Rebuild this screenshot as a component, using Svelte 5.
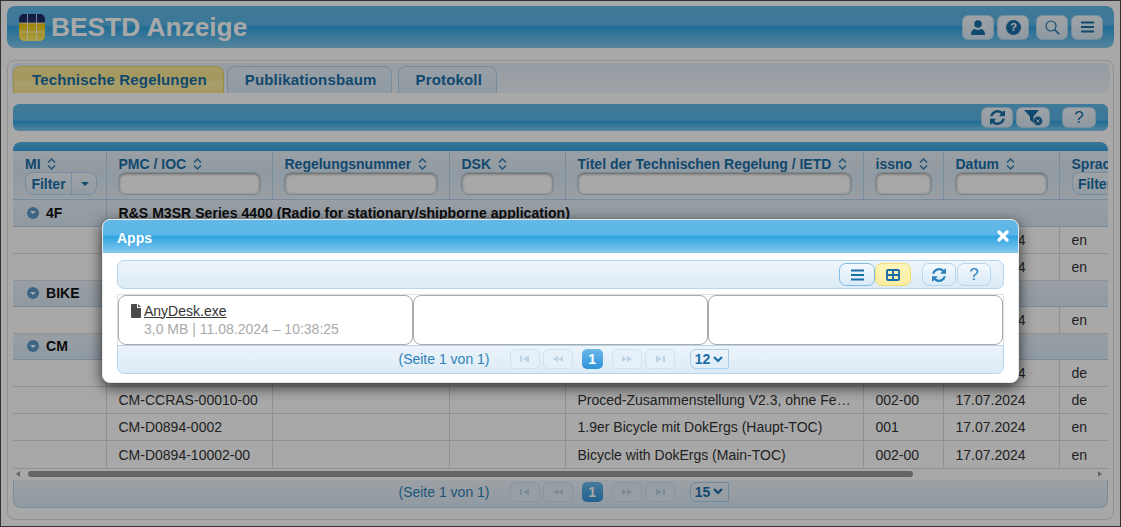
<script lang="ts">
  type Row = { nr: string; title: string; issno: string; date: string; lang: string };
  type Group = { id: string; title: string; rows: Row[] };

  const refresh =
    "M1511 928q0 5-1 7-64 268-268 434.5t-478 166.5q-146 0-282.5-55t-243.5-157l-129 129q-19 19-45 19t-45-19-19-45v-448q0-26 19-45t45-19h448q26 0 45 19t19 45-19 45l-137 137q71 66 161 102t187 36q134 0 250-65t186-179q11-17 53-117 8-23 30-23h192q13 0 22.5 9.5t9.5 22.5zm25-800v448q0 26-19 45t-45 19h-448q-26 0-45-19t-19-45 19-45l138-138q-148-137-349-137-134 0-250 65t-186 179q-11 17-53 117-8 23-30 23h-199q-13 0-22.5-9.5t-9.5-22.5v-7q65-268 270-434.5t480-166.5q146 0 284 55.5t245 156.5l130-129q19-19 45-19t45 19 19 45z";

  const columns = [
    { label: "PMC / IOC", width: 166 },
    { label: "Regelungsnummer", width: 177 },
    { label: "DSK", width: 116 },
    { label: "Titel der Technischen Regelung / IETD", width: 298 },
    { label: "issno", width: 80 },
    { label: "Datum", width: 116 },
  ];

  const d = "17.07.2024";
  const groups: Group[] = [
    {
      id: "4F",
      title: "R&S M3SR Series 4400 (Radio for stationary/shipborne application)",
      rows: [
        { nr: "", title: "", issno: "", date: d, lang: "en" },
        { nr: "", title: "", issno: "", date: d, lang: "en" },
      ],
    },
    { id: "BIKE", title: "", rows: [{ nr: "", title: "", issno: "", date: d, lang: "en" }] },
    {
      id: "CM",
      title: "",
      rows: [
        { nr: "", title: "", issno: "", date: d, lang: "de" },
        { nr: "CM-CCRAS-00010-00", title: "Proced-Zusammenstellung V2.3, ohne Fehlercodes", issno: "002-00", date: d, lang: "de" },
        { nr: "CM-D0894-0002", title: "1.9er Bicycle mit DokErgs (Haupt-TOC)", issno: "001", date: d, lang: "en" },
        { nr: "CM-D0894-10002-00", title: "Bicycle with DokErgs (Main-TOC)", issno: "002-00", date: d, lang: "en" },
      ],
    },
  ];
</script>

{#snippet refreshIcon(size: number)}
  <svg width={size} height={size} viewBox="0 0 1536 1536" fill="currentColor"><path d={refresh} /></svg>
{/snippet}

{#snippet burger()}
  <svg width="13" height="12" viewBox="0 0 13 12" fill="currentColor">
    <rect y="0.5" width="13" height="2" /><rect y="5" width="13" height="2" /><rect y="9.5" width="13" height="2" />
  </svg>
{/snippet}

{#snippet sort()}
  <svg class="sort" width="9" height="12" viewBox="0 0 9 12" fill="none" stroke="currentColor" stroke-width="1.5">
    <path d="M1 4.5 4.5 1 8 4.5M1 7.5 4.5 11 8 7.5" />
  </svg>
{/snippet}

{#snippet pager(size: string)}
  <div class="pager">
    <span class="pageinfo">(Seite 1 von 1)</span>
    <div class="pagebtns">
      <span class="pg off"><svg width="10" height="8" viewBox="0 0 10 8" fill="currentColor"><rect y="1" width="2" height="6" /><path d="M9 0.5v7L3 4z" /></svg></span>
      <span class="pg off"><svg width="12" height="8" viewBox="0 0 12 8" fill="currentColor"><path d="M6 1v6L1 4zM11 1v6L6 4z" /></svg></span>
    </div>
    <span class="pg current">1</span>
    <div class="pagebtns">
      <span class="pg off"><svg width="12" height="8" viewBox="0 0 12 8" fill="currentColor"><path d="M1 1v6l5-3zM6 1v6l5-3z" /></svg></span>
      <span class="pg off"><svg width="10" height="8" viewBox="0 0 10 8" fill="currentColor"><path d="M1 0.5v7L7 4z" /><rect x="8" y="1" width="2" height="6" /></svg></span>
    </div>
    <span class="pagesize">{size}
      <svg width="10" height="7" viewBox="0 0 10 7" fill="none" stroke="currentColor" stroke-width="2.2"><path d="M1 1l4 4 4-4" /></svg>
    </span>
  </div>
{/snippet}

<div class="screen">
  <header class="appbar">
    <div class="brand">
      <svg class="logo" width="26" height="27" viewBox="0 0 26 27">
        <defs>
          <clipPath id="logoclip"><rect width="26" height="27" rx="5" /></clipPath>
          <linearGradient id="logogold" x1="0" y1="0" x2="0" y2="1">
            <stop offset="0" stop-color="#f0c400" /><stop offset="1" stop-color="#fdf06a" />
          </linearGradient>
        </defs>
        <g clip-path="url(#logoclip)">
          <rect width="26" height="9" fill="#1c2f66" />
          <rect y="9" width="26" height="18" fill="url(#logogold)" />
          <path d="M8.5 0v27M17.5 0v27M0 9h26M0 18h26" stroke="#fff" stroke-opacity=".75" stroke-width="1" />
        </g>
      </svg>
      <h1>BESTD Anzeige</h1>
    </div>
    <div class="appbtns">
      <div class="btngroup">
        <button class="appbtn" aria-label="Benutzer">
          <svg width="14" height="15" viewBox="0 0 14 15" fill="currentColor"><circle cx="7" cy="4" r="3.8" /><path d="M0.5 15c-.6 0-.5-.6-.5-1 0-3 2-5 4-5 1 .6 2 1 3 1s2-.4 3-1c2 0 4 2 4 5 0 .4.1 1-.5 1z" /></svg>
        </button>
        <button class="appbtn" aria-label="Hilfe">
          <svg width="15" height="15" viewBox="0 0 15 15"><circle cx="7.5" cy="7.5" r="7.5" fill="currentColor" /><text x="7.5" y="11.3" text-anchor="middle" class="qmark">?</text></svg>
        </button>
      </div>
      <div class="btngroup">
        <button class="appbtn" aria-label="Suche">
          <svg width="15" height="15" viewBox="0 0 15 15" fill="none" stroke="currentColor"><circle cx="6" cy="6" r="5" stroke-width="1.1" /><path d="M9.7 9.7 14.3 14.3" stroke-width="1.5" /></svg>
        </button>
        <button class="appbtn" aria-label="Menü">{@render burger()}</button>
      </div>
    </div>
  </header>

  <section class="panel">
    <nav class="tabs">
      <span class="tab active">Technische Regelungen</span>
      <span class="tab">Publikationsbaum</span>
      <span class="tab">Protokoll</span>
    </nav>

    <div class="content">
      <div class="toolbar">
        <div class="btngroup">
          <button class="toolbtn" aria-label="Aktualisieren">{@render refreshIcon(15)}</button>
          <button class="toolbtn wide" aria-label="Filter löschen">
            <svg width="19" height="16" viewBox="0 0 19 16"><path d="M0 0h15L9.5 6.5V13L6 10V6.5z" fill="currentColor" /><circle cx="14" cy="11" r="4.4" fill="currentColor" /><path d="M12.5 9.5l3 3M15.5 9.5l-3 3" stroke="#dde6ee" stroke-width="1" /></svg>
          </button>
        </div>
        <button class="toolbtn help" aria-label="Hilfe"><span>?</span></button>
      </div>

      <div class="tablewrap">
        <div class="tabletop"></div>
        <table>
          <colgroup>
            <col style="width:93px" />
            {#each columns as c}<col style="width:{c.width}px" />{/each}
            <col style="width:60px" />
          </colgroup>
          <thead>
            <tr>
              <th>
                <div class="th-label">MI {@render sort()}</div>
                <div class="filtersplit"><span>Filter</span><span class="caret"></span></div>
              </th>
              {#each columns as c}
                <th>
                  <div class="th-label">{c.label} {@render sort()}</div>
                  <div class="filterinput"></div>
                </th>
              {/each}
              <th>
                <div class="th-label">Sprache</div>
                <div class="filtersplit open"><span>Filter</span></div>
              </th>
            </tr>
          </thead>
          <tbody>
            {#each groups as g}
              <tr class="group">
                <td class="gid"><span class="minus"></span>{g.id}</td>
                <td colspan="7">{g.title}</td>
              </tr>
              {#each g.rows as r}
                <tr>
                  <td></td>
                  <td>{r.nr}</td>
                  <td></td>
                  <td></td>
                  <td class="ell">{r.title}</td>
                  <td>{r.issno}</td>
                  <td>{r.date}</td>
                  <td>{r.lang}</td>
                </tr>
              {/each}
            {/each}
          </tbody>
        </table>
      </div>

      <div class="scrollbar">
        <span class="arrow left"></span>
        <span class="thumb"></span>
        <span class="arrow right"></span>
      </div>

      <div class="tablefoot">{@render pager("15")}</div>
    </div>
  </section>

  <div class="overlay"></div>

  <div class="dialog" role="dialog" aria-label="Apps">
    <div class="dialog-title">
      <span class="dialog-name">Apps</span>
      <svg class="close" width="12" height="12" viewBox="0 0 12 12" stroke="#fff" stroke-width="3.2" stroke-linecap="round"><path d="M2 2l8 8M10 2l-8 8" /></svg>
    </div>
    <div class="dialog-body">
      <div class="dlgbar">
        <div class="btngroup">
          <button class="dlgbtn" aria-label="Liste">{@render burger()}</button>
          <button class="dlgbtn on" aria-label="Kacheln">
            <svg width="14" height="12" viewBox="0 0 14 12" fill="none" stroke="currentColor" stroke-width="1.9"><rect x="1" y="1" width="12" height="10" rx="1" /><path d="M7 1v10M1 6h12" /></svg>
          </button>
        </div>
        <div class="btngroup">
          <button class="dlgbtn light" aria-label="Aktualisieren">{@render refreshIcon(14)}</button>
          <button class="dlgbtn light" aria-label="Hilfe"><span class="q">?</span></button>
        </div>
      </div>
      <div class="cards">
        <div class="card">
          <div class="fname">
            <svg width="10" height="14" viewBox="0 0 10 14" fill="#4a4a4a"><path d="M1 0h5v4h4v9a1 1 0 0 1-1 1H1a1 1 0 0 1-1-1V1a1 1 0 0 1 1-1zM7 0l3 3H7z" /></svg>
            <span>AnyDesk.exe</span>
          </div>
          <div class="fmeta">3,0 MB | 11.08.2024 – 10:38:25</div>
        </div>
        <div class="card"></div>
        <div class="card"></div>
      </div>
      <div class="dlgfoot">{@render pager("12")}</div>
    </div>
  </div>
</div>

<style>
  :global(body) {
    margin: 0;
    background: #fff;
  }

  .screen {
    position: relative;
    box-sizing: border-box;
    width: 1121px;
    height: 527px;
    overflow: hidden;
    padding: 5px 6px 0;
    border: 1px solid #333;
    font-family: "Liberation Sans", Arial, sans-serif;
    font-size: 14px;
    color: #333;
  }

  button {
    padding: 0;
    font: inherit;
    cursor: pointer;
  }

  .appbar {
    display: flex;
    align-items: center;
    justify-content: space-between;
    height: 42px;
    padding: 0 11px 0 12px;
    border-radius: 8px;
    background: linear-gradient(#62b9e8 0, #5ab5e6 45%, #30a5e2 50%, #85c9ee 100%);
  }

  .brand {
    display: flex;
    align-items: center;
    gap: 6px;
  }

  h1 {
    margin: 0;
    font-size: 26.3px;
    font-weight: 700;
    color: #fff;
    white-space: nowrap;
  }

  .appbtns {
    display: flex;
    gap: 7px;
  }

  .btngroup {
    display: flex;
    gap: 3px;
  }

  .appbtn {
    display: flex;
    align-items: center;
    justify-content: center;
    width: 32px;
    height: 25px;
    border: 1px solid #b6d6ec;
    border-radius: 6px;
    background: linear-gradient(#f0f7fc, #d7e9f6);
    color: #1a6ea8;
  }

  .qmark {
    font-size: 11px;
    font-weight: 700;
    fill: #fff;
  }

  .panel {
    box-sizing: border-box;
    height: 460px;
    margin-top: 12px;
    padding: 2px 3px;
    border: 1px solid #ddd;
    border-radius: 8px;
  }

  .tabs {
    display: flex;
    gap: 3px;
    height: 30px;
    padding: 3px 0 0 2px;
    box-sizing: border-box;
    border-radius: 6px;
    background: linear-gradient(#e3eef7, #f0f6fb);
  }

  .tabs .tab:nth-child(3) {
    margin-left: 3px;
  }

  .tab {
    display: flex;
    align-items: center;
    padding: 0 14px 2px 17px;
    border: 1px solid #b5d5ee;
    border-bottom: 0;
    border-radius: 8px 8px 0 0;
    background: linear-gradient(#e6f2fb, #dbeaf6);
    color: #1a6ea8;
    font-size: 15px;
    font-weight: 700;
    letter-spacing: 0.16px;
    white-space: nowrap;
  }

  .tab.active {
    padding: 0 16px 2px 18px;
    border-color: #ecd55e;
    background: linear-gradient(#fbeb9a, #f9e78f 45%, #fdf0a8 60%, #f9e88f);
  }

  .content {
    padding: 0 2px;
  }

  .toolbar {
    display: flex;
    align-items: center;
    justify-content: flex-end;
    gap: 12px;
    height: 27px;
    margin-top: 11px;
    padding-right: 12px;
    border-radius: 6px;
    background: linear-gradient(#62b9e8 0, #5ab5e6 60%, #30a5e2 65%, #85c9ee 100%);
  }

  .toolbtn {
    display: flex;
    align-items: center;
    justify-content: center;
    width: 32px;
    height: 21px;
    border: 1px solid #b6d6ec;
    border-radius: 6px;
    background: linear-gradient(#f0f7fc, #d7e9f6);
    color: #1a6ea8;
  }

  .toolbtn.wide {
    width: 34px;
  }

  .toolbtn.help {
    width: 34px;
    font-size: 17px;
    font-weight: 400;
  }

  .tablewrap {
    margin-top: 11px;
    overflow: hidden;
  }

  .tabletop {
    height: 9px;
    border-radius: 8px 8px 0 0;
    background: linear-gradient(#5ab5e6, #30a5e2);
  }

  table {
    table-layout: fixed;
    width: 1106px;
    border-collapse: collapse;
    color: #333;
  }

  th,
  td {
    box-sizing: border-box;
    padding: 0 12px;
    overflow: hidden;
    white-space: nowrap;
    text-align: left;
  }

  th {
    height: 48px;
    border: 1px solid #b5d5ee;
    border-top: 0;
    padding-top: 5px;
    vertical-align: top;
    background: linear-gradient(#e8f2fa 0, #dbe9f5 50%, #e8f1f9 100%);
    color: #1a6ea8;
    font-size: 14px;
  }

  th:first-child,
  td:first-child {
    border-left-width: 0;
  }

  .th-label {
    height: 16px;
    line-height: 16px;
  }

  .sort {
    margin-left: 3px;
    vertical-align: -1px;
    opacity: 0.85;
  }

  .filterinput {
    box-sizing: border-box;
    height: 23px;
    margin: 0 -1px;
    border: 1px solid #b5cfe3;
    border-radius: 7px;
    background: #fff;
    box-shadow: inset 0 1px 3px rgba(0, 0, 0, 0.45);
  }

  .filtersplit {
    display: flex;
    box-sizing: border-box;
    width: 72px;
    height: 23px;
    border: 1px solid #b5d5ee;
    border-radius: 8px;
    background: linear-gradient(#f0f7fc, #dfedf8);
    line-height: 23px;
  }

  .filtersplit span:first-child {
    width: 45px;
    text-align: center;
    border-right: 1px solid #b5d5ee;
  }

  .caret {
    width: 0;
    height: 0;
    margin: 9px 0 0 9px;
    border: 4px solid transparent;
    border-top: 4px solid #1a6ea8;
  }

  .filtersplit.open {
    border-radius: 8px 0 0 8px;
  }

  td {
    height: 27px;
    padding-top: 1px;
    border: 1px solid #ddd;
  }

  tbody tr:last-child td {
    height: 28px;
  }

  .ell {
    padding-right: 7px;
    text-overflow: ellipsis;
  }

  .group td {
    height: 26px;
    padding-top: 0;
    border-color: #b5d5ee;
    background: linear-gradient(#e8f1f9, #dbe9f5);
    color: #111;
    font-weight: 700;
    letter-spacing: 0.05px;
  }

  tbody tr:first-child td {
    height: 27px;
  }

  .gid {
    padding-left: 14px;
  }

  .minus {
    position: relative;
    display: inline-block;
    width: 12px;
    height: 12px;
    margin-right: 7px;
    border-radius: 50%;
    background: #5d9acb;
    vertical-align: -1px;
  }

  .minus::after {
    content: "";
    position: absolute;
    left: 3px;
    top: 4.5px;
    border: 3px solid transparent;
    border-top: 3px solid #fff;
  }

  .scrollbar {
    position: relative;
    height: 11px;
    display: flex;
    align-items: center;
  }

  .thumb {
    width: 885px;
    height: 6px;
    margin-left: 15px;
    border-radius: 3px;
    background: #999;
  }

  .arrow {
    position: absolute;
    border: 3px solid transparent;
  }

  .arrow.left {
    left: 0;
    border-right: 4px solid #999;
  }

  .arrow.right {
    right: 3px;
    border-left: 4px solid #999;
  }

  .tablefoot {
    height: 28px;
    padding-bottom: 3px;
    border: 1px solid #b5d5ee;
    border-top: 0;
    box-sizing: border-box;
    border-radius: 0 0 8px 8px;
    background: linear-gradient(#edf4fa, #dcebf6);
  }

  .pager {
    display: flex;
    align-items: center;
    justify-content: center;
    gap: 9px;
    height: 100%;
    padding-left: 6px;
    color: #2e82bb;
  }

  .pageinfo {
    margin-right: 11px;
  }

  .pagebtns {
    display: flex;
    gap: 3px;
  }

  .pg {
    display: flex;
    align-items: center;
    justify-content: center;
    box-sizing: border-box;
    height: 20px;
  }

  .pg.off {
    width: 30px;
    border: 1px solid #cfe2f1;
    border-radius: 5px;
    background: #e6f0f9;
    color: #bcd3e6;
  }

  .pg.current {
    width: 21px;
    border-radius: 5px;
    background: linear-gradient(#6bb9ea, #2f93d8);
    color: #fff;
    font-weight: 700;
  }

  .pagesize {
    display: flex;
    align-items: center;
    justify-content: center;
    gap: 3px;
    box-sizing: border-box;
    width: 39px;
    height: 20px;
    margin-left: 6px;
    border: 1px solid #a9cfea;
    border-radius: 6px 0 0 6px;
    color: #1a6ea8;
    font-weight: 700;
  }

  .overlay {
    position: absolute;
    inset: 0;
    background: rgba(0, 0, 0, 0.34);
  }

  .dialog {
    position: absolute;
    left: 101px;
    top: 218px;
    box-sizing: border-box;
    width: 917px;
    height: 164px;
    border: 1px solid #e8e8e8;
    border-radius: 8px;
    background: #fff;
    overflow: hidden;
    box-shadow: 0 4px 14px rgba(0, 0, 0, 0.75);
  }

  .dialog-title {
    display: flex;
    align-items: center;
    justify-content: space-between;
    height: 33px;
    padding: 0 9px 0 14px;
    background: linear-gradient(#62b9e8 0, #5ab5e6 45%, #30a5e2 50%, #85c9ee 100%);
    color: #fff;
    font-weight: 700;
  }

  .dialog-name {
    padding-top: 2px;
  }

  .close {
    margin-bottom: 2px;
  }

  .dialog-body {
    padding: 7px 14px 0;
  }

  .dlgbar {
    display: flex;
    align-items: center;
    justify-content: flex-end;
    gap: 11px;
    box-sizing: border-box;
    height: 29px;
    padding-right: 12px;
    border: 1px solid #b5d5ee;
    border-radius: 7px;
    background: linear-gradient(#edf4fa, #dcebf6);
  }

  .dlgbar .btngroup {
    gap: 0;
  }

  .dlgbar .btngroup + .btngroup {
    gap: 1px;
  }

  .dlgbtn {
    display: flex;
    align-items: center;
    justify-content: center;
    box-sizing: border-box;
    width: 36px;
    height: 23px;
    border: 1px solid #7fbbe3;
    border-radius: 7px;
    background: linear-gradient(#f4f9fd, #d9eaf7);
    color: #1a6ea8;
  }

  .dlgbtn.on {
    border-color: #f0dd72;
    background: linear-gradient(#fdf5bb, #fbeea4);
  }

  .dlgbtn.light {
    width: 34px;
    border-color: #b5d5ee;
    color: #2e82bb;
  }

  .q {
    font-size: 17px;
  }

  .cards {
    display: grid;
    grid-template-columns: repeat(3, 1fr);
    box-sizing: border-box;
    height: 51px;
    margin-top: 5px;
    border: 1px solid #e0e0e0;
    border-bottom: 0;
  }

  .card {
    box-sizing: border-box;
    height: 50px;
    padding: 6px 12px;
    border: 1px solid #aaa;
    border-radius: 8px;
  }

  .fname {
    display: flex;
    align-items: center;
    gap: 3px;
    height: 17px;
    color: #333;
    text-decoration: underline;
  }

  .fmeta {
    margin-top: 2px;
    padding-left: 13px;
    color: #aaa;
    line-height: 17px;
  }

  .dlgfoot {
    box-sizing: border-box;
    height: 29px;
    padding-bottom: 1px;
    border: 1px solid #b5d5ee;
    border-radius: 0 0 7px 7px;
    background: linear-gradient(#edf4fa, #dcebf6);
  }
</style>
